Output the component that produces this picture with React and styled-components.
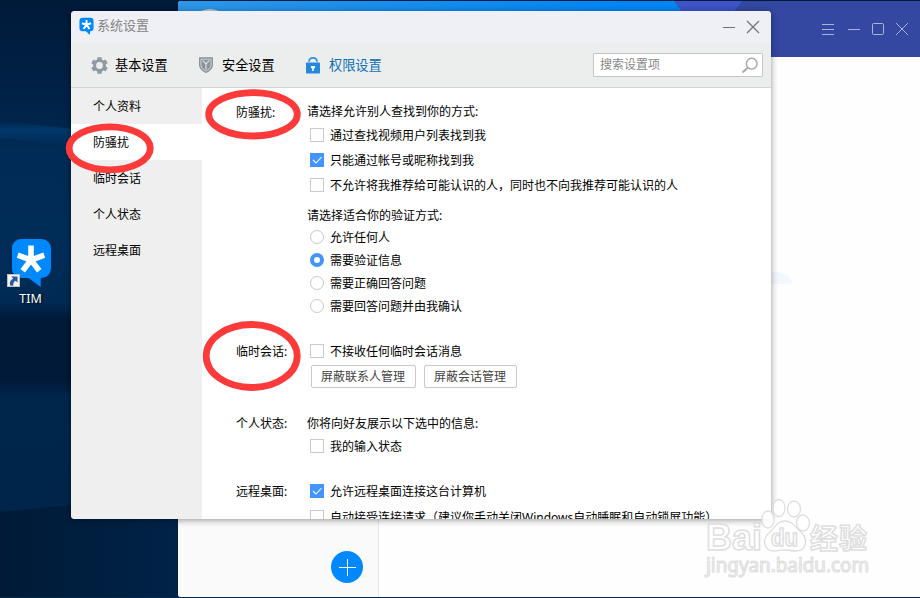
import React from "react";
import styled, { createGlobalStyle } from "styled-components";

const GlobalStyle = createGlobalStyle`
  * { box-sizing: border-box; }
  body {
    margin: 0;
    overflow: hidden;
    font-family: "Noto Sans", "Noto Sans CJK SC", sans-serif;
    font-size: 12px;
    color: #000;
  }
`;

const Desktop = styled.main`
  position: relative;
  width: 920px;
  height: 598px;
  overflow: hidden;
  background: #00234a;
`;

const Wallpaper = styled.svg`
  position: absolute;
  inset: 0;
`;

const Shortcut = styled.div`
  position: absolute;
  left: 0;
  top: 236px;
  width: 61px;
  display: flex;
  flex-direction: column;
  align-items: flex-end;
`;

const ShortcutName = styled.span`
  width: 61px;
  text-align: center;
  margin-top: 1px;
  font-size: 12.5px;
  line-height: 18px;
  color: #fff;
  text-shadow: 1px 1px 2px #000;
`;

const MainWindow = styled.section`
  position: absolute;
  left: 178px;
  top: 1px;
  width: 742px;
  height: 596px;
  display: flex;
  flex-direction: column;
  border-radius: 3px 0 0 3px;
  overflow: hidden;
  background: #fefefe;
`;

const MainHeader = styled.header`
  height: 56px;
  flex: none;
`;

const HeaderArt = styled.svg`
  display: block;
`;

const MainBody = styled.div`
  flex: 1;
  display: flex;
`;

const ChatList = styled.aside`
  width: 201px;
  background: #fafafa;
  border-right: 1px solid #e6e6e6;
  display: flex;
  align-items: flex-end;
  justify-content: flex-end;
  padding: 0 15px 14px 0;
`;

const AddButton = styled.button`
  width: 32px;
  height: 32px;
  border: 0;
  padding: 0;
  border-radius: 50%;
  background: #0089ff;
  svg { display: block; }
`;

const EmptyState = styled.div`
  flex: 1;
  padding: 214px 0 0 389px;
`;

const Dialog = styled.section`
  position: absolute;
  left: 71px;
  top: 11px;
  width: 700px;
  height: 508px;
  display: flex;
  flex-direction: column;
  border-radius: 4px;
  overflow: hidden;
  background: #fff;
`;

const DialogShadow = styled.div`
  position: absolute;
  left: 71px;
  top: 11px;
  width: 700px;
  height: 508px;
  border-radius: 4px;
  box-shadow: 0 1px 7px rgba(0, 0, 0, 0.42);
`;

const TitleBar = styled.header`
  height: 32px;
  flex: none;
  display: flex;
  align-items: flex-start;
  padding: 6px 11px 0 8px;
  background: #eff0f5;
`;

const Title = styled.h1`
  flex: 1;
  margin: 0 0 0 3px;
  font-size: 13px;
  font-weight: 400;
  line-height: 17px;
  color: #858585;
`;

const Toolbar = styled.nav`
  height: 45px;
  flex: none;
  display: flex;
  align-items: center;
  padding: 0 8px 0 20px;
  background: #eceeed;
  border-bottom: 1px solid #d3d4d4;
`;

const Tab = styled.button`
  width: 107px;
  height: 32px;
  display: flex;
  align-items: center;
  gap: 7px;
  padding: 0;
  border: 0;
  background: none;
  font: inherit;
  font-size: 13.2px;
  line-height: 20px;
  white-space: nowrap;
  color: ${(p) => (p.$active ? "#0d70b5" : "#000")};
`;

const SearchBox = styled.div`
  width: 170px;
  height: 24px;
  margin-left: auto;
  display: flex;
  align-items: center;
  justify-content: space-between;
  padding: 0 3px 0 6px;
  border: 1px solid #c4c6c6;
  border-radius: 1px;
  background: #fff;
  color: #888;
  line-height: 20px;
`;

const DialogBody = styled.div`
  flex: 1;
  min-height: 0;
  display: flex;
`;

const SideMenu = styled.aside`
  width: 131px;
  background: #efefef;
`;

const SideItem = styled.div`
  height: 36px;
  padding-left: 22px;
  line-height: 38px;
  background: ${(p) => (p.$active ? "#fff" : "transparent")};
`;

const Content = styled.div`
  flex: 1;
  overflow: hidden;
  padding: 14px 0 0 34px;
`;

const Section = styled.div`
  display: flex;
  height: ${(p) => p.$height}px;
`;

const SectionLabel = styled.div`
  width: 71px;
  line-height: ${(p) => (p.$low ? 22 : 20)}px;
`;

const SectionBody = styled.div`
  flex: 1;
`;

const Heading = styled.div`
  height: 20px;
  line-height: 20px;
  margin-top: ${(p) => p.$gap || 0}px;
`;

const OptionRow = styled.div`
  height: 20px;
  margin-top: ${(p) => p.$gap || 0}px;
  padding-left: 3px;
  display: flex;
  align-items: center;
  gap: 6px;
  line-height: 20px;
  white-space: nowrap;
`;

const OptionText = styled.span`
  padding-top: 2px;
`;

const CheckMark = styled.span`
  width: 14px;
  height: 14px;
  flex: none;
  border: 1px solid ${(p) => (p.$on ? "#4394ff" : "#c5cbd1")};
  background: ${(p) => (p.$on ? "#4394ff" : "#fff")};
  svg { display: block; }
`;

const RadioMark = styled.span`
  width: 14px;
  height: 14px;
  flex: none;
  border-radius: 50%;
  border: ${(p) => (p.$on ? "4px solid #4394ff" : "1px solid #c5cbd1")};
  background: #fff;
`;

const ButtonRow = styled.div`
  display: flex;
  gap: 8px;
  margin: 4px 0 0 4px;
`;

const PlainButton = styled.button`
  width: ${(p) => p.$width}px;
  height: 23px;
  padding: 0 1px 0 0;
  border: 1px solid #c6c8ca;
  border-radius: 2px;
  background: #fff;
  font: inherit;
  line-height: 20px;
  color: #444;
`;

const Overlay = styled.svg`
  position: absolute;
  inset: 0;
  pointer-events: none;
`;

function TimLogo({ width, height }) {
  return (
    <svg width={width} height={height} viewBox="0 -2 40 51">
      <path d="M9 0h22a9 9 0 0 1 9 9v20.500a9 9 0 0 1-9 9h-1V49L18.500 38.500H9a9 9 0 0 1-9-9V9a9 9 0 0 1 9-9z" fill="#0089ff" />
      <path d="M20 20V6.500M20 20l13-4.200M20 20l8.300 11.500M20 20l-8.300 11.500M20 20L7 15.800" stroke="#fff" strokeWidth="5.600" fill="none" />
    </svg>
  );
}

function DesktopIcon() {
  return (
    <svg width="61" height="53" viewBox="0 0 61 53">
      <path d="M21 3h20.500a9.500 9.500 0 0 1 9.500 9.500v20a9.500 9.500 0 0 1-9.500 9.500h-.800v9L28.500 42H21a9 9 0 0 1-9-9V12a9 9 0 0 1 9-9z" fill="#0089ff" />
      <path d="M31 24V9.500M31 24l13.300-4.800M31 24l8.300 10.800M31 24l-8.300 10.800M31 24l-13.300-4.800" stroke="#fff" strokeWidth="5.600" fill="none" />
      <rect x="7.500" y="38.500" width="12" height="12" fill="#f2f2f2" stroke="#c4c0bb" />
      <path d="M11.500 40.500h6v6l-1.800-1.800c-2 .9-2.700 2.500-2.200 4.800l-3 .2c-1.500-3.200-.2-5.700 2.700-7z" fill="#285a9c" />
    </svg>
  );
}

function GearIcon() {
  return (
    <svg width="17" height="17" viewBox="-8.500 -8.500 17 17">
      <g fill="#909aa1">
        {[0, 60, 120].map((a) => (
          <rect key={a} x="-2.200" y="-8.300" width="4.400" height="16.600" rx="0.600" transform={`rotate(${a})`} />
        ))}
        <circle r="6.400" />
      </g>
      <circle r="3.400" fill="#eceeed" />
    </svg>
  );
}

function ShieldIcon() {
  return (
    <svg width="17" height="17" viewBox="0 0 17 17">
      <path d="M1.700 1h12.600v7c0 3.500-3 5.700-6.300 7.300C4.700 13.700 1.700 11.500 1.700 8z" fill="#c9ced0" stroke="#8a949a" strokeWidth="1.400" />
      <path d="M3.500 2.700h9V8c0 2.500-2 4.100-4.500 5.500C5.500 12.100 3.500 10.500 3.500 8z" fill="#89949a" />
      <path d="M4.800 3.700L8 7l3.200-3.300M8 6.500v6" stroke="#dde1e2" strokeWidth="1.200" fill="none" />
    </svg>
  );
}

function LockIcon() {
  return (
    <svg width="17" height="17" viewBox="0 0 17 17">
      <path d="M4 4.700C4 2.200 5.300.900 8 .900s4 1.300 4 3.800" stroke="#2f8fe0" strokeWidth="1.600" fill="none" />
      <rect x="1" y="5.500" width="14" height="11" rx="0.800" fill="#2489de" />
      <path d="M6 9h4v2.300H8.800V14H7.200v-2.700H6z" fill="#fff" />
    </svg>
  );
}

function SearchIcon() {
  return (
    <svg width="18" height="18" viewBox="0 0 18 18">
      <circle cx="10.700" cy="7.700" r="5.400" fill="none" stroke="#a5a5a5" strokeWidth="1.400" />
      <path d="M6.700 11.700L1.500 16.500" stroke="#aaa" strokeWidth="2" />
    </svg>
  );
}

function Option({ radio, on, gap, children }) {
  return (
    <OptionRow $gap={gap}>
      {radio ? (
        <RadioMark $on={on} />
      ) : (
        <CheckMark $on={on}>
          {on && (
            <svg width="12" height="12" viewBox="0 0 12 12">
              <path d="M2 6l3 3 5.500-6" stroke="#fff" strokeWidth="1.100" fill="none" />
            </svg>
          )}
        </CheckMark>
      )}
      <OptionText>{children}</OptionText>
    </OptionRow>
  );
}

const tabs = [
  { name: "基本设置", icon: <GearIcon /> },
  { name: "安全设置", icon: <ShieldIcon /> },
  { name: "权限设置", icon: <LockIcon />, active: true },
];

const menu = ["个人资料", "防骚扰", "临时会话", "个人状态", "远程桌面"];

export default function App() {
  return (
    <Desktop>
      <GlobalStyle />
      <Wallpaper width="920" height="598">
        <defs>
          <linearGradient id="night" x1="0" y1="0" x2="0" y2="1">
            <stop offset="0" stopColor="#001a3a" />
            <stop offset="0.200" stopColor="#00244a" />
            <stop offset="0.250" stopColor="#002b56" />
            <stop offset="0.420" stopColor="#002d58" />
            <stop offset="0.505" stopColor="#002a54" />
            <stop offset="0.535" stopColor="#001a38" />
            <stop offset="0.635" stopColor="#001a38" />
            <stop offset="0.665" stopColor="#00264c" />
            <stop offset="1" stopColor="#00244a" />
          </linearGradient>
          <linearGradient id="beam" x1="0" y1="0" x2="0" y2="1">
            <stop offset="0" stopColor="#004078" stopOpacity="0" />
            <stop offset="0.350" stopColor="#004078" stopOpacity="0.700" />
            <stop offset="1" stopColor="#004078" stopOpacity="0" />
          </linearGradient>
          <linearGradient id="ground" x1="0" y1="0" x2="1" y2="0">
            <stop offset="0" stopColor="#001a36" />
            <stop offset="1" stopColor="#002348" />
          </linearGradient>
        </defs>
        <rect width="920" height="598" fill="url(#night)" />
        <path d="M0 121L72 129V146L0 138z" fill="url(#beam)" />
        <path d="M0 512L72 505L180 494V598H0z" fill="url(#ground)" />
        <rect y="597" width="920" height="1" fill="#002a52" />
      </Wallpaper>

      <Shortcut>
        <DesktopIcon />
        <ShortcutName>TIM</ShortcutName>
      </Shortcut>

      <MainWindow>
        <MainHeader>
          <HeaderArt width="742" height="56">
            <defs>
              <linearGradient id="sky" x1="0" y1="0" x2="1" y2="0">
                <stop offset="0" stopColor="#2e96e8" />
                <stop offset="0.600" stopColor="#0086f5" />
                <stop offset="1" stopColor="#0086f5" />
              </linearGradient>
            </defs>
            <rect width="742" height="56" fill="url(#sky)" />
            <path d="M496 0H742V56H538z" fill="#3e54c8" />
            <path d="M564 0H742V56H523z" fill="#3448a2" />
            <circle cx="32" cy="28" r="20" fill="#c3d0db" />
            <g stroke="#a9b3e0" fill="none">
              <path d="M644 23.500h12M644 28.500h12M644 33.500h12M670 28.500h12" />
              <rect x="694.500" y="22.500" width="11" height="11" rx="1" />
              <path d="M718 22l12 12M730 22l-12 12" />
            </g>
          </HeaderArt>
        </MainHeader>
        <MainBody>
          <ChatList>
            <AddButton aria-label="添加">
              <svg width="32" height="32">
                <path d="M8 16.500h17M16.500 8v17" stroke="#fff" />
              </svg>
            </AddButton>
          </ChatList>
          <EmptyState>
            <svg width="28" height="12">
              <path d="M0 12V2Q4 0 10 0Q21 1 25 12z" fill="#f3f8fe" />
            </svg>
          </EmptyState>
        </MainBody>
      </MainWindow>

      <DialogShadow />
      <Dialog>
        <TitleBar>
          <TimLogo width={15} height={18} />
          <Title>系统设置</Title>
          <svg width="38" height="18" viewBox="0 0 38 18" fill="none" stroke="#707078">
            <path d="M1 10.500h12" />
            <path d="M25 4l12 12M37 4L25 16" strokeWidth="1.200" />
          </svg>
        </TitleBar>
        <Toolbar>
          {tabs.map((t) => (
            <Tab key={t.name} $active={t.active}>
              {t.icon}
              {t.name}
            </Tab>
          ))}
          <SearchBox>
            搜索设置项
            <SearchIcon />
          </SearchBox>
        </Toolbar>
        <DialogBody>
          <SideMenu>
            {menu.map((m, i) => (
              <SideItem key={m} $active={i === 1}>{m}</SideItem>
            ))}
          </SideMenu>
          <Content>
            <Section $height={239}>
              <SectionLabel $low>防骚扰:</SectionLabel>
              <SectionBody>
                <Heading>请选择允许别人查找到你的方式:</Heading>
                <Option gap={3}>通过查找视频用户列表找到我</Option>
                <Option gap={5} on>只能通过帐号或昵称找到我</Option>
                <Option gap={5}>不允许将我推荐给可能认识的人，同时也不向我推荐可能认识的人</Option>
                <Heading $gap={11}>请选择适合你的验证方式:</Heading>
                <Option radio gap={1}>允许任何人</Option>
                <Option radio gap={3} on>需要验证信息</Option>
                <Option radio gap={3}>需要正确回答问题</Option>
                <Option radio gap={3}>需要回答问题并由我确认</Option>
              </SectionBody>
            </Section>
            <Section $height={73}>
              <SectionLabel $low>临时会话:</SectionLabel>
              <SectionBody>
                <Option>不接收任何临时会话消息</Option>
                <ButtonRow>
                  <PlainButton $width={105}>屏蔽联系人管理</PlainButton>
                  <PlainButton $width={93}>屏蔽会话管理</PlainButton>
                </ButtonRow>
              </SectionBody>
            </Section>
            <Section $height={67}>
              <SectionLabel>个人状态:</SectionLabel>
              <SectionBody>
                <Heading>你将向好友展示以下选中的信息:</Heading>
                <Option gap={2}>我的输入状态</Option>
              </SectionBody>
            </Section>
            <Section $height={50}>
              <SectionLabel $low>远程桌面:</SectionLabel>
              <SectionBody>
                <Option on>允许远程桌面连接这台计算机</Option>
                <Option gap={6}>自动接受连接请求（建议你手动关闭Windows自动睡眠和自动锁屏功能）</Option>
              </SectionBody>
            </Section>
          </Content>
        </DialogBody>
      </Dialog>

      <Overlay width="920" height="598">
        <g fill="none" stroke="#fd3a3a" strokeWidth="6.800">
          <ellipse cx="109.700" cy="148.300" rx="40.600" ry="21.500" />
          <ellipse cx="253" cy="114.300" rx="44.300" ry="21.700" />
          <ellipse cx="251.700" cy="356" rx="45.500" ry="31.500" />
        </g>
        <g fill="#fff" fillOpacity="0.850" stroke="#dedede" strokeWidth="1.300">
          <ellipse cx="768" cy="519.500" rx="6" ry="8.500" />
          <ellipse cx="779" cy="508" rx="6" ry="8.500" />
          <ellipse cx="794" cy="509" rx="6.500" ry="8" />
          <ellipse cx="803" cy="523" rx="6.500" ry="8" />
          <path d="M785 521c-8 0-10 7-15 11-9 7-6 19 4 19 5 0 7-1 11-1s7 1 11 1c10 0 13-11 5-19-5-4-8-11-16-11z" />
          <g fontFamily="Liberation Sans, sans-serif" fontWeight="700" strokeWidth="1.500">
            <text x="706" y="550" fontSize="36" textLength="56" lengthAdjust="spacingAndGlyphs">Bai</text>
            <text x="771" y="546" fontSize="23" textLength="27" lengthAdjust="spacingAndGlyphs">du</text>
            <text x="810" y="549" fontSize="28" textLength="57" fontFamily="Noto Sans CJK SC, sans-serif">经验</text>
          </g>
          <text x="706" y="572" fontSize="19" strokeWidth="1.200" fontFamily="Noto Sans, sans-serif" textLength="163" lengthAdjust="spacingAndGlyphs">jingyan.baidu.com</text>
        </g>
      </Overlay>
    </Desktop>
  );
}
